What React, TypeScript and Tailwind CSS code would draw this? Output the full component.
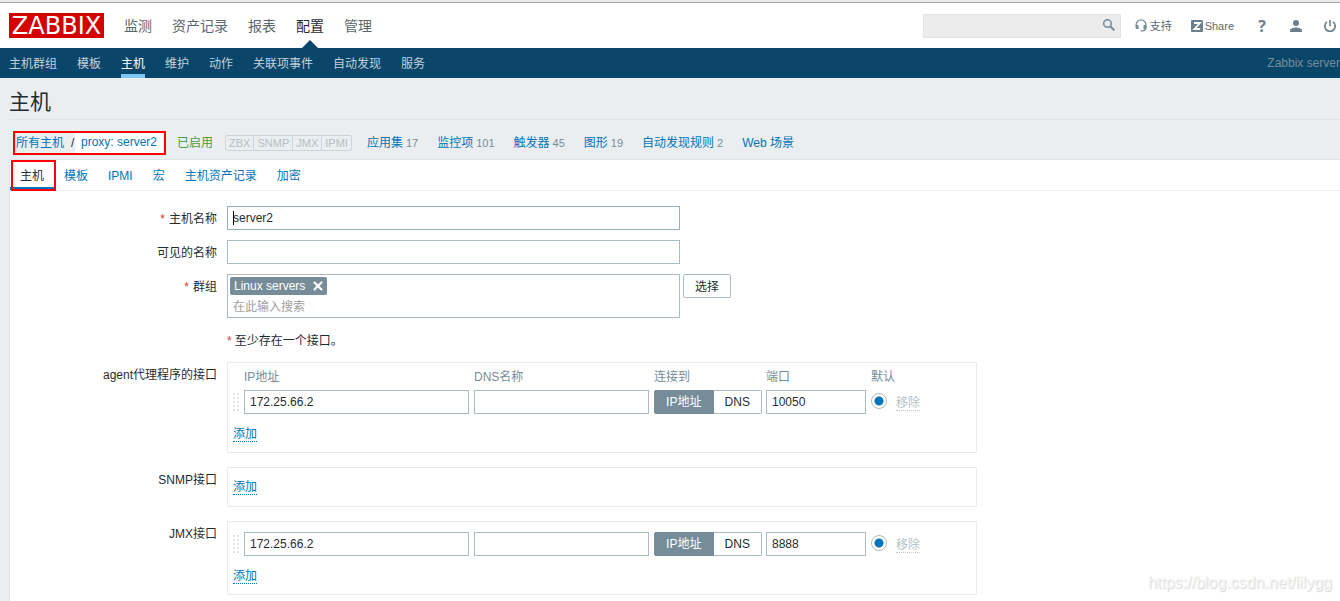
import { useState } from "react";

const mainMenu = ["监测", "资产记录", "报表", "配置", "管理"];
const subMenu = ["主机群组", "模板", "主机", "维护", "动作", "关联项事件", "自动发现", "服务"];
const tabs = ["主机", "模板", "IPMI", "宏", "主机资产记录", "加密"];
const links: { label: string; count?: number }[] = [
  { label: "应用集", count: 17 },
  { label: "监控项", count: 101 },
  { label: "触发器", count: 45 },
  { label: "图形", count: 19 },
  { label: "自动发现规则", count: 2 },
  { label: "Web 场景" },
];

const field = "h-6 border border-[#acbbc2] bg-white px-[5px] outline-none";

function SearchIcon() {
  return (
    <svg className="block" width="12" height="12" viewBox="0 0 12 12" fill="none" stroke="currentColor" aria-hidden="true">
      <circle cx="4.5" cy="4.5" r="3.8" strokeWidth="1.5" />
      <path d="M7.2 7.2l4.200 4.200" strokeWidth="2" />
    </svg>
  );
}

function HeadsetIcon() {
  return (
    <svg className="block" width="12" height="13" viewBox="0 0 12 13" aria-hidden="true">
      <path d="M1.200 7V5.600a4.800 4.800 0 0 1 9.600 0V9c0 1.900-1.200 2.800-3.300 2.800H5.500" fill="none" stroke="currentColor" strokeWidth="1.300" />
      <path d="M.6 6h2.900v4H2C1.100 10 .6 9.400.6 8.500zM8.500 6h2.900v4H8.500z" fill="currentColor" />
    </svg>
  );
}

function PersonIcon() {
  return (
    <svg className="block" width="12" height="12" viewBox="0 0 12 12" fill="currentColor" aria-hidden="true">
      <circle cx="6" cy="3" r="3" />
      <path d="M0 12v-1.500C0 8.500 3.500 7.500 6 7.500s6 1 6 3V12z" />
    </svg>
  );
}

function PowerIcon() {
  return (
    <svg className="block" width="12" height="12" viewBox="0 0 12 12" fill="none" stroke="currentColor" strokeWidth="1.6" aria-hidden="true">
      <path d="M6 0v6.200M3 1.900a5.200 5.200 0 1 0 6 0" />
    </svg>
  );
}

function Header() {
  return (
    <header>
      <div className="h-[3px] border-b border-[#a8a5a0] bg-[#ebebeb]" />
      <div className="flex h-[45px] items-stretch bg-white pr-1 pl-[9px]">
        <a
          href="#home"
          className="mt-2.5 flex h-[25px] w-[95px] items-center justify-center bg-[#d40000] font-['DejaVu_Sans',sans-serif] text-[24px] leading-none text-white"
        >
          ZABBIX
        </a>
        <nav className="ml-5 flex gap-5 text-sm" aria-label="主菜单">
          {mainMenu.map((m) => (
            <a
              key={m}
              href="#menu"
              className={
                m === "配置"
                  ? "relative flex items-center text-[#1f2c33]"
                  : "flex items-center text-[#59676f]"
              }
            >
              {m}
              {m === "配置" && (
                <svg className="absolute bottom-0 left-1/2 -translate-x-1/2" width="16" height="8" viewBox="0 0 16 8" aria-hidden="true">
                  <path d="M8 0L16 8H0z" fill="#0a466a" />
                </svg>
              )}
            </a>
          ))}
        </nav>
        <div className="ml-auto flex items-center gap-3.5 text-[11px] text-[#5c6b73]">
          <form className="flex h-6 w-[198px] items-center border border-[#dfe4e7] bg-[#ececec]">
            <input aria-label="搜索" className="h-full min-w-0 flex-1 bg-transparent px-[5px] text-xs outline-none" />
            <button type="button" aria-label="搜索" className="mr-[5px] mb-0.5 text-[#768d99]">
              <SearchIcon />
            </button>
          </form>
          <div className="flex items-center gap-[22px]">
            <div className="flex items-center gap-[19px] pt-0.5">
              <a href="#support" className="flex items-center gap-[3px]">
                <span className="pb-0.5 text-[#768d99]">
                  <HeadsetIcon />
                </span>
                支持
              </a>
              <a href="#share" className="flex items-center gap-0.5">
                <span className="pb-0.5">
                  <svg className="block" width="12" height="12" viewBox="0 0 12 12" aria-hidden="true">
                    <rect width="12" height="12" rx="1" fill="#6a7f8b" />
                    <path d="M3 3h6L3.400 9H9.200" fill="none" stroke="#fff" strokeWidth="1.8" />
                  </svg>
                </span>
                Share
              </a>
            </div>
            <div className="flex items-center gap-[22px] text-[#6a7f8b]">
              <a href="#help" aria-label="帮助" className="w-3 text-center font-['Open_Sans',sans-serif] text-base leading-none font-bold">
                ?
              </a>
              <a href="#profile" aria-label="用户">
                <PersonIcon />
              </a>
              <a href="#logout" aria-label="退出">
                <PowerIcon />
              </a>
            </div>
          </div>
        </div>
      </div>
      <div className="flex h-[30px] justify-between bg-[#0a466a] pl-[9px]">
        <nav className="flex gap-5" aria-label="子菜单">
          {subMenu.map((m) => (
            <a
              key={m}
              href="#sub"
              className={
                m === "主机"
                  ? "flex items-center border-y-4 border-t-transparent border-b-[#7cc5f5] pt-0.5 text-white"
                  : "flex items-center pt-0.5 text-[#c3d1d9]"
              }
            >
              {m}
            </a>
          ))}
        </nav>
        <span className="flex items-center text-[#768d99]">Zabbix server</span>
      </div>
    </header>
  );
}

function Breadcrumbs() {
  return (
    <div className="flex h-[39px] items-center pt-[7px] pl-[13px] text-[#0275b8]">
      <div className="flex h-6 items-center border-2 border-[#f00] pr-px pl-px">
        <a href="#hosts">所有主机</a>
        <span className="w-[11px] pl-[7px] text-[#1f2c33]">/</span>
        <a href="#host" className="flex h-5 items-center bg-white px-1.5 pb-0.5">
          proxy: server2
        </a>
      </div>
      <span className="ml-[11px] text-[#429e47]">已启用</span>
      <span className="ml-3 flex h-4 items-center divide-x divide-[#ccd5d9] rounded-xs border border-[#ccd5d9] text-[11px] text-[#b4bfc5]">
        {["ZBX", "SNMP", "JMX", "IPMI"].map((s) => (
          <span key={s} className="flex h-full items-center px-[3px]">
            {s}
          </span>
        ))}
      </span>
      <nav className="ml-[15px] flex gap-[19px]" aria-label="主机配置">
        {links.map((l) => (
          <span key={l.label} className="flex items-baseline gap-[3px]">
            <a href="#link">{l.label}</a>
            {l.count !== undefined && <span className="text-[11px] text-[#768d99]">{l.count}</span>}
          </span>
        ))}
      </nav>
    </div>
  );
}

function Row({ label, required, id, children }: { label: string; required?: boolean; id?: string; children: React.ReactNode }) {
  return (
    <div className="flex items-start gap-2.5">
      <label htmlFor={id} className="flex h-6 w-[207px] shrink-0 items-center justify-end pt-0.5">
        {required && <span className="mr-1 text-[#e33734]">*</span>}
        {label}
      </label>
      {children}
    </div>
  );
}

function Add() {
  return (
    <button type="button" className="block border-b border-dotted border-[#0275b8] pt-0.5 leading-[13px] text-[#0275b8]">
      添加
    </button>
  );
}

function Interfaces({ name, port, header }: { name: string; port: string; header?: boolean }) {
  const [mode, setMode] = useState("IP地址");
  return (
    <table className="w-full table-fixed text-left">
      <colgroup>
        <col className="w-[11px]" />
        <col className="w-[230px]" />
        <col className="w-[180px]" />
        <col className="w-[112px]" />
        <col className="w-[105px]" />
        <col className="w-[25px]" />
        <col />
      </colgroup>
      {header && (
        <thead>
          <tr className="h-[22px] align-top leading-[18px] text-[#768d99]">
            <th />
            <th className="font-normal">IP地址</th>
            <th className="font-normal">DNS名称</th>
            <th className="font-normal">连接到</th>
            <th className="font-normal">端口</th>
            <th colSpan={2} className="font-normal">默认</th>
          </tr>
        </thead>
      )}
      <tbody>
        <tr className="h-6">
          <td>
            <svg className="block" width="6" height="18" viewBox="0 0 6 18" fill="#dfe4e7" aria-hidden="true">
              {[0, 4, 8, 12, 16].map((y) => (
                <path key={y} d={`M0 ${y}h2v2H0zM4 ${y}h2v2H4z`} />
              ))}
            </svg>
          </td>
          <td className="pr-[5px]">
            <input aria-label="IP地址" defaultValue="172.25.66.2" className={`${field} block w-full`} />
          </td>
          <td className="pr-[5px]">
            <input aria-label="DNS名称" className={`${field} block w-full`} />
          </td>
          <td className="pr-1">
            <div className="flex h-6">
              {["IP地址", "DNS"].map((m) => (
                <button
                  key={m}
                  type="button"
                  aria-pressed={mode === m}
                  onClick={() => setMode(m)}
                  className={
                    mode === m
                      ? "grow border border-[#768d99] bg-[#768d99] px-2.5 text-white first:rounded-l-xs last:rounded-r-xs"
                      : "grow border border-[#acbbc2] px-2.5 first:rounded-l-xs first:border-r-0 last:rounded-r-xs last:border-l-0"
                  }
                >
                  {m}
                </button>
              ))}
            </div>
          </td>
          <td className="pr-[5px]">
            <input aria-label="端口" defaultValue={port} className={`${field} block w-full`} />
          </td>
          <td>
            <input
              type="radio"
              name={name}
              defaultChecked
              aria-label="默认"
              className="mb-0.5 block size-4 appearance-none rounded-full border border-[#acbbc2] bg-white checked:bg-[radial-gradient(circle,#0275b8_0_4px,#fff_5px)]"
            />
          </td>
          <td>
            <button type="button" disabled className="mt-0.5 block border-b border-dotted border-[#c0c9ce] pt-0.5 leading-[13px] text-[#b4bfc5]">
              移除
            </button>
          </td>
        </tr>
      </tbody>
    </table>
  );
}

const box = "w-full max-w-[750px] border border-[#e8ecee] pl-[5px]";

export default function App() {
  const [tab, setTab] = useState("主机");
  return (
    <div className="relative flex min-h-screen flex-col overflow-hidden bg-[#ebeef0] font-['Liberation_Sans','Noto_Sans_CJK_SC',sans-serif] text-xs text-[#1f2c33]">
      <Header />
      <h1 className="ml-[9px] flex h-[42px] items-center border-b border-[#dfe4e7] pt-2 pb-px text-[21px]">主机</h1>
      <Breadcrumbs />
      <main className="ml-[9px] flex-1 border-t border-l border-[#dfe4e7] bg-white">
        <div className="flex h-[31px] border-b border-[#ebeef0]" role="tablist">
          {tabs.map((t) => (
            <button
              key={t}
              type="button"
              role="tab"
              aria-selected={tab === t}
              onClick={() => setTab(t)}
              className={
                tab === t
                  ? "relative border-y-3 border-t-transparent border-b-[#0275b8] px-2.5 pt-0.5"
                  : "px-2.5 pt-0.5 text-[#0275b8]"
              }
            >
              {t}
              {t === "主机" && (
                <span className="absolute -top-[3px] -right-0.5 -bottom-1 left-px border-2 border-[#f00]" />
              )}
            </button>
          ))}
        </div>
        <form className="flex flex-col pt-[15px] pb-1.5">
          <div className="flex flex-col gap-2.5">
            <Row label="主机名称" required id="host">
              <div className="relative w-full max-w-[453px]">
                <input id="host" defaultValue="server2" className="block h-6 w-full border border-[#98b1b7] px-[5px] outline-none" />
                <span className="absolute top-[5px] left-1.5 h-3.5 w-px bg-black" />
              </div>
            </Row>
            <Row label="可见的名称" id="visible">
              <input id="visible" className={`${field} w-full max-w-[453px]`} />
            </Row>
            <Row label="群组" required id="groups">
              <div className="-mr-[7px] w-full max-w-[453px] border border-[#acbbc2] p-0.5">
                <span className="flex h-[18px] w-fit items-center gap-2 rounded-xs bg-[#768d99] px-1 text-white">
                  Linux servers
                  <button type="button" aria-label="删除">
                    <svg className="block" width="10" height="10" viewBox="0 0 10 10" aria-hidden="true">
                      <path d="M1 1l8 8M9 1L1 9" stroke="#fff" strokeWidth="2.2" />
                    </svg>
                  </button>
                </span>
                <input id="groups" placeholder="在此输入搜索" className="block h-5 w-full px-[3px] pt-1 outline-none placeholder:text-[#a0a0a0]" />
              </div>
              <button type="button" className="h-6 w-12 shrink-0 rounded-xs border border-[#acbbc2] bg-white pt-px">
                选择
              </button>
            </Row>
          </div>
          <p className="mt-2.5 ml-[217px] flex h-6 items-center pt-0.5">
            <span className="mr-[3px] text-[#e33734]">*</span>至少存在一个接口。
          </p>
          <div className="mt-2.5 flex flex-col gap-3.5">
            <Row label="agent代理程序的接口">
              <div className={`${box} pt-[5px] pb-2.5`}>
                <Interfaces name="agent" port="10050" header />
                <div className="mt-3">
                  <Add />
                </div>
              </div>
            </Row>
            <Row label="SNMP接口">
              <div className={`${box} py-[11px]`}>
                <Add />
              </div>
            </Row>
            <Row label="JMX接口">
              <div className={`${box} py-2.5`}>
                <Interfaces name="jmx" port="8888" />
                <div className="mt-3">
                  <Add />
                </div>
              </div>
            </Row>
          </div>
        </form>
      </main>
      <span className="pointer-events-none absolute right-2 bottom-1.5 text-base text-[#f6f6f6] [text-shadow:1px_1px_1px_#d4d4d4]">
        https://blog.csdn.net/lilygg
      </span>
    </div>
  );
}
